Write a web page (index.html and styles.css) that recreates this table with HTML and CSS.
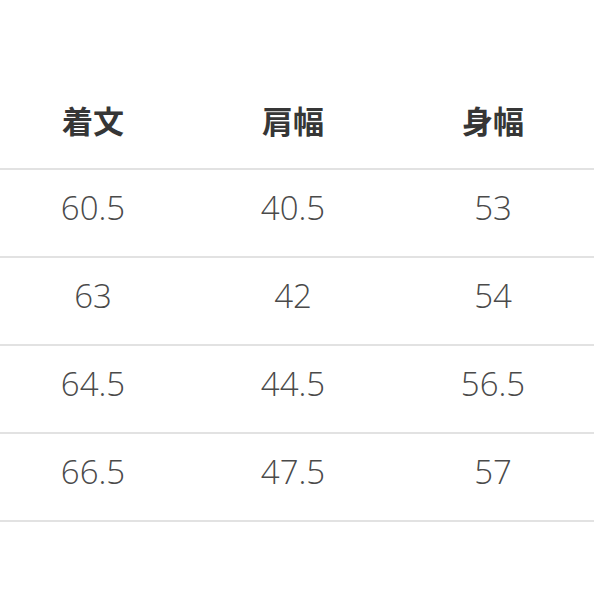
FILE: index.html
```html
<!DOCTYPE html>
<html lang="ja">
<head>
<meta charset="utf-8">
<link rel="stylesheet" href="styles.css">
</head>
<body>
<div class="page">
  <div class="table">
    <div class="row head">
      <div class="cell">着文</div>
      <div class="cell">肩幅</div>
      <div class="cell">身幅</div>
    </div>
    <div class="row">
      <div class="cell">60.5</div>
      <div class="cell">40.5</div>
      <div class="cell">53</div>
    </div>
    <div class="row">
      <div class="cell">63</div>
      <div class="cell">42</div>
      <div class="cell">54</div>
    </div>
    <div class="row">
      <div class="cell">64.5</div>
      <div class="cell">44.5</div>
      <div class="cell">56.5</div>
    </div>
    <div class="row">
      <div class="cell">66.5</div>
      <div class="cell">47.5</div>
      <div class="cell">57</div>
    </div>
  </div>
</div>
</body>
</html>
```
FILE: styles.css
```css
html, body {
  margin: 0;
  padding: 0;
  background: #ffffff;
}
.page {
  width: 594px;
  height: 594px;
  overflow: hidden;
  padding-top: 80px;
  box-sizing: border-box;
}
.table {
  display: flex;
  flex-direction: column;
}
.row {
  display: grid;
  grid-template-columns: 200px 200px 200px;
  margin-left: -7px;
  height: 88px;
  align-items: center;
  border-bottom: 2px solid #e2e2e2;
  box-sizing: border-box;
  width: 608px;
  padding-bottom: 12px;
}
.row.head {
  height: 90px;
  padding-bottom: 10px;
}
.cell {
  text-align: center;
  font-family: "Open Sans", "Noto Sans CJK JP", sans-serif;
  font-weight: 300;
  font-size: 33px;
  color: #4a4a4a;
  line-height: 1;
}
.head .cell {
  font-family: "Noto Sans CJK JP", sans-serif;
  font-weight: 700;
  font-size: 31px;
  color: #363636;
}
```
